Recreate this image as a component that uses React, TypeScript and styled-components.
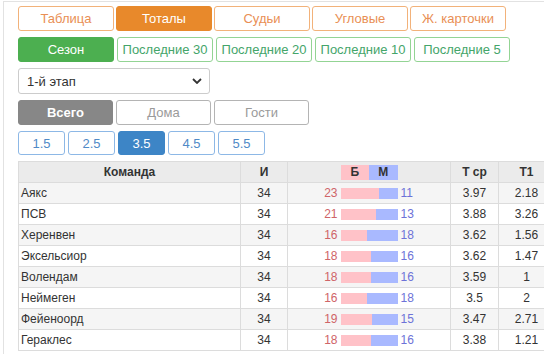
import React from 'react';
import styled, { createGlobalStyle } from 'styled-components';

const GlobalStyle = createGlobalStyle`
  html, body {
    margin: 0;
    padding: 0;
    background: #fff;
    overflow: hidden;
  }
  body {
    font-family: 'Liberation Sans', Arial, sans-serif;
    color: #333;
  }
`;

type Tone = 'orange' | 'green' | 'gray' | 'blue';

const palette: Record<Tone, { bg: string; border: string; text: string }> = {
  orange: { bg: '#e8892b', border: '#f2b27a', text: '#e98f55' },
  green: { bg: '#4caf50', border: '#93d494', text: '#44a56a' },
  gray: { bg: '#878787', border: '#b4b4b4', text: '#9a9a9a' },
  blue: { bg: '#3d85c6', border: '#8db8e6', text: '#4f8ac7' },
};

const tabs = ['Таблица', 'Тоталы', 'Судьи', 'Угловые', 'Ж. карточки'];
const periods = ['Сезон', 'Последние 30', 'Последние 20', 'Последние 10', 'Последние 5'];
const places = ['Всего', 'Дома', 'Гости'];
const totals = ['1.5', '2.5', '3.5', '4.5', '5.5'];

const rows = [
  { team: 'Аякс', games: 34, over: 23, under: 11, avg: '3.97', t1: '2.18' },
  { team: 'ПСВ', games: 34, over: 21, under: 13, avg: '3.88', t1: '3.26' },
  { team: 'Херенвен', games: 34, over: 16, under: 18, avg: '3.62', t1: '1.56' },
  { team: 'Эксельсиор', games: 34, over: 18, under: 16, avg: '3.62', t1: '1.47' },
  { team: 'Волендам', games: 34, over: 18, under: 16, avg: '3.59', t1: '1' },
  { team: 'Неймеген', games: 34, over: 16, under: 18, avg: '3.5', t1: '2' },
  { team: 'Фейеноорд', games: 34, over: 19, under: 15, avg: '3.47', t1: '2.71' },
  { team: 'Гераклес', games: 34, over: 18, under: 16, avg: '3.38', t1: '1.21' },
];

export default function App() {
  return (
    <>
      <GlobalStyle />
      <Frame>
        <ButtonRow $gap={2}>
          {tabs.map((t, i) => (
            <Toggle key={t} $tone='orange' $active={i === 1} $width={96}>
              {t}
            </Toggle>
          ))}
        </ButtonRow>
        <ButtonRow $gap={3}>
          {periods.map((t, i) => (
            <Toggle key={t} $tone='green' $active={i === 0} $width={96}>
              {t}
            </Toggle>
          ))}
        </ButtonRow>
        <SelectBox>
          <Select defaultValue='1'>
            <option value='1'>1-й этап</option>
            <option value='2'>2-й этап</option>
          </Select>
          <Chevron viewBox='0 0 10 6' width='10' height='6'>
            <path d='M1 1 L5 5 L9 1' fill='none' stroke='#333' strokeWidth='1.8' />
          </Chevron>
        </SelectBox>
        <ButtonRow $gap={3}>
          {places.map((t, i) => (
            <Toggle key={t} $tone='gray' $active={i === 0} $width={95} $bold={i === 0}>
              {t}
            </Toggle>
          ))}
        </ButtonRow>
        <ButtonRow $gap={3}>
          {totals.map((t, i) => (
            <Toggle key={t} $tone='blue' $active={i === 2} $width={47} $height={24}>
              {t}
            </Toggle>
          ))}
        </ButtonRow>
        <Table>
          <colgroup>
            <col style={{ width: 222 }} />
            <col style={{ width: 47 }} />
            <col style={{ width: 163 }} />
            <col style={{ width: 48 }} />
            <col style={{ width: 56 }} />
          </colgroup>
          <thead>
            <tr>
              <Th>Команда</Th>
              <Th>И</Th>
              <Th>
                <BarGrid>
                  <span />
                  <Legend>
                    <LegendCell $bg='#ffc2c8'>Б</LegendCell>
                    <LegendCell $bg='#a9b9ff'>М</LegendCell>
                  </Legend>
                  <span />
                </BarGrid>
              </Th>
              <Th>Т ср</Th>
              <Th>Т1</Th>
            </tr>
          </thead>
          <tbody>
            {rows.map((r) => (
              <Tr key={r.team}>
                <TeamCell>{r.team}</TeamCell>
                <Td>{r.games}</Td>
                <Td>
                  <BarGrid>
                    <OverNum>{r.over}</OverNum>
                    <Bar>
                      <span style={{ width: `${(r.over / (r.over + r.under)) * 100}%` }} />
                    </Bar>
                    <UnderNum>{r.under}</UnderNum>
                  </BarGrid>
                </Td>
                <Td>{r.avg}</Td>
                <Td>{r.t1}</Td>
              </Tr>
            ))}
          </tbody>
        </Table>
      </Frame>
    </>
  );
}

const Frame = styled.div`
  margin: 1px 0 0 3px;
  border-top: 1px solid #e2e2e2;
  border-left: 1px solid #e2e2e2;
  padding: 4px 0 0 14px;
  display: flex;
  flex-direction: column;
  gap: 6px;
  height: 352px;
  overflow: hidden;
`;

const ButtonRow = styled.div<{ $gap: number }>`
  display: flex;
  gap: ${(p) => p.$gap}px;
`;

const Toggle = styled.button<{
  $tone: Tone;
  $active: boolean;
  $width: number;
  $height?: number;
  $bold?: boolean;
}>`
  box-sizing: border-box;
  flex-shrink: 0;
  width: ${(p) => p.$width}px;
  height: ${(p) => p.$height ?? 25}px;
  padding: 0;
  border-radius: 3px;
  font-family: 'Liberation Sans', Arial, sans-serif;
  font-size: 13px;
  font-weight: ${(p) => (p.$bold ? 700 : 400)};
  cursor: pointer;
  border: 1.5px solid ${(p) => (p.$active ? palette[p.$tone].bg : palette[p.$tone].border)};
  background: ${(p) => (p.$active ? palette[p.$tone].bg : '#fff')};
  color: ${(p) => (p.$active ? '#fff' : palette[p.$tone].text)};
`;

const SelectBox = styled.div`
  position: relative;
  flex-shrink: 0;
  width: 192px;
  height: 26px;
`;

const Select = styled.select`
  appearance: none;
  box-sizing: border-box;
  width: 100%;
  height: 100%;
  border: 1px solid #ccc;
  border-radius: 3px;
  background: #fff;
  padding: 0 0 0 8px;
  font-family: 'Liberation Sans', Arial, sans-serif;
  font-size: 13px;
  color: #333;
`;

const Chevron = styled.svg`
  position: absolute;
  right: 8px;
  top: 10px;
  pointer-events: none;
`;

const Table = styled.table`
  flex-shrink: 0;
  border-collapse: collapse;
  table-layout: fixed;
  width: 536px;
  font-size: 12px;
  color: #333;
`;

const Th = styled.th`
  height: 20px;
  padding: 0;
  background: #ebebeb;
  border: 1px solid #dcdcdc;
  font-weight: 700;
  text-align: center;
  color: #333;
`;

const Tr = styled.tr`
  &:nth-child(odd) {
    background: #f5f5f5;
  }
`;

const Td = styled.td`
  height: 20px;
  padding: 0;
  border: 1px solid #dcdcdc;
  text-align: center;
`;

const TeamCell = styled(Td)`
  text-align: left;
  padding-left: 2px;
`;

const BarGrid = styled.div`
  display: grid;
  grid-template-columns: 1fr 57px 1fr;
  column-gap: 3px;
  align-items: center;
`;

const OverNum = styled.span`
  text-align: right;
  color: #cf6468;
`;

const UnderNum = styled.span`
  text-align: left;
  color: #6d72d8;
`;

const Bar = styled.div`
  height: 11px;
  background: #a9b9ff;
  display: flex;
  span {
    display: block;
    height: 100%;
    background: #ffc2c8;
  }
`;

const Legend = styled.div`
  display: flex;
  height: 15px;
`;

const LegendCell = styled.span<{ $bg: string }>`
  flex: 1;
  background: ${(p) => p.$bg};
  line-height: 15px;
  font-weight: 700;
`;
